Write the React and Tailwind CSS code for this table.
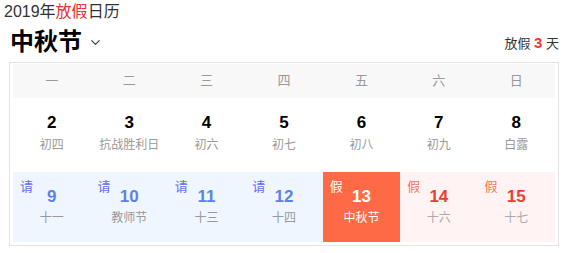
import { ChevronDown } from 'lucide-react';

const font = { fontFamily: '"Liberation Sans", "Noto Sans CJK SC", sans-serif' };

const weekdays = ['一', '二', '三', '四', '五', '六', '日'];

const week1 = [
  { d: 2, l: '初四' },
  { d: 3, l: '抗战胜利日' },
  { d: 4, l: '初六' },
  { d: 5, l: '初七' },
  { d: 6, l: '初八' },
  { d: 7, l: '初九' },
  { d: 8, l: '白露' },
];

const week2 = [
  { d: 9, l: '十一', t: 'work' },
  { d: 10, l: '教师节', t: 'work' },
  { d: 11, l: '十三', t: 'work' },
  { d: 12, l: '十四', t: 'work' },
  { d: 13, l: '中秋节', t: 'today' },
  { d: 14, l: '十六', t: 'off' },
  { d: 15, l: '十七', t: 'off' },
];

function DayCell({ day }) {
  const styles = {
    work: { bg: 'bg-[#f0f6ff]', tag: 'text-[#626fe6]', num: 'text-[#5b82ea]', lunar: 'text-[#999]', mark: '请' },
    today: { bg: 'bg-[#ff6a46]', tag: 'text-white', num: 'text-white', lunar: 'text-white', mark: '假' },
    off: { bg: 'bg-[#fff4f3]', tag: 'text-[#f57454]', num: 'text-[#f03c30]', lunar: 'text-[#aaa]', mark: '假' },
  }[day.t];

  return (
    <div className={`relative flex flex-col items-center pt-[15px] ${styles.bg}`}>
      <span className={`absolute left-[7px] top-[7px] text-[13px] leading-[16px] ${styles.tag}`}>{styles.mark}</span>
      <span className={`text-[17px] leading-[20px] font-bold ${styles.num}`}>{day.d}</span>
      <span className={`mt-[2px] text-[12px] leading-[18px] ${styles.lunar}`}>{day.l}</span>
    </div>
  );
}

export default function App() {
  return (
    <div className="w-[569px] h-[253px] bg-white overflow-hidden" style={font}>
      <div className="pl-[4px] pt-[2px] text-[16px] leading-[20px] text-[#333]">
        2019年<span className="text-[#e5322d]">放假</span>日历
      </div>

      <div className="flex items-end justify-between pl-[10px] pr-[10px] h-[36px]">
        <div className="flex items-center">
          <span className="text-[24px] leading-[32px] font-bold text-black">中秋节</span>
          <ChevronDown className="ml-[6px] w-[15px] h-[15px] text-[#333]" strokeWidth={1.75} />
        </div>
        <div className="text-[13px] leading-[20px] text-[#333] pb-[4px]">
          放假 <span className="text-[15px] font-bold text-[#f33]">3</span> 天
        </div>
      </div>

      <div className="mx-[9px] mt-[4px] w-[550px] border border-[#e3e3e3] px-[3px] pt-[1px] pb-[3px]">
        <div className="grid grid-cols-7 h-[34px] bg-[#f8f8f8] items-center text-center text-[13px] text-[#999]">
          {weekdays.map((w) => (
            <div key={w}>{w}</div>
          ))}
        </div>

        <div className="grid grid-cols-7 h-[74px]">
          {week1.map((day) => (
            <div key={day.d} className="flex flex-col items-center pt-[15px]">
              <span className="text-[17px] leading-[20px] font-bold text-black">{day.d}</span>
              <span className="mt-[3px] text-[12px] leading-[18px] text-[#999]">{day.l}</span>
            </div>
          ))}
        </div>

        <div className="grid grid-cols-7 h-[70px]">
          {week2.map((day) => (
            <DayCell key={day.d} day={day} />
          ))}
        </div>
      </div>
    </div>
  );
}
